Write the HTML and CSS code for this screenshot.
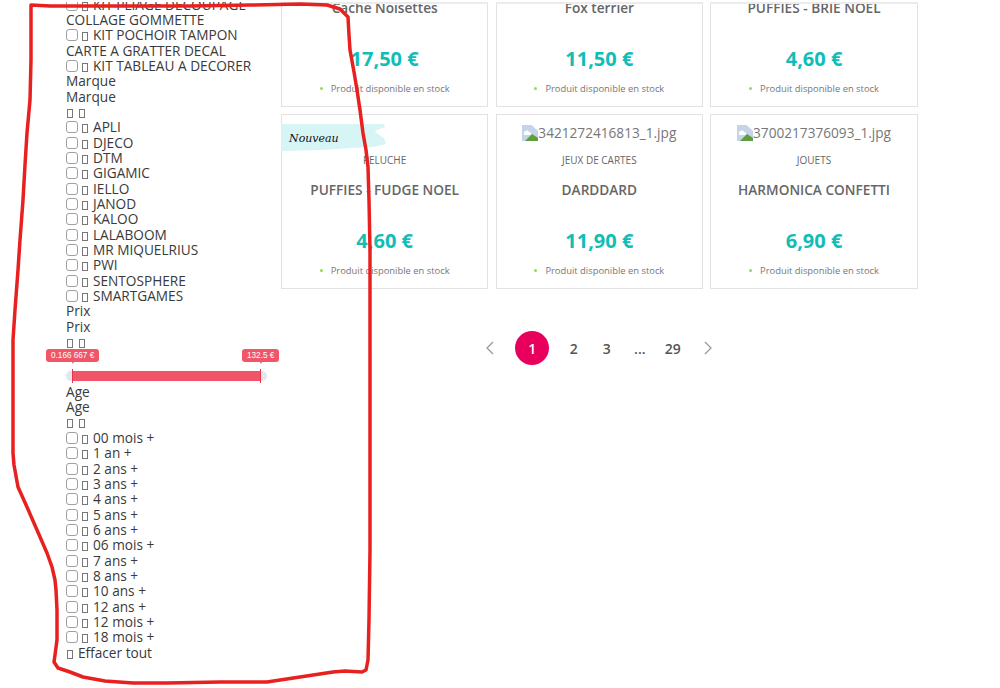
FILE: index.html
```html
<!DOCTYPE html>
<html lang="en">
<head>
    <meta charset="UTF-8">
    <title>Catalogue</title>
    <link rel="stylesheet" href="styles.css">
</head>
<body>
    <div class="shot">
        <aside class="filters">
            <div><span class="check"></span><i class="tofu"></i>KIT PLIAGE DECOUPAGE</div>
            <div>COLLAGE GOMMETTE</div>
            <div><span class="check"></span><i class="tofu"></i>KIT POCHOIR TAMPON</div>
            <div>CARTE A GRATTER DECAL</div>
            <div><span class="check"></span><i class="tofu"></i>KIT TABLEAU A DECORER</div>
            <div>Marque</div>
            <div>Marque</div>
            <div><i class="tofu tofu-head"></i><i class="tofu tofu-head"></i></div>
            <div><span class="check"></span><i class="tofu"></i>APLI</div>
            <div><span class="check"></span><i class="tofu"></i>DJECO</div>
            <div><span class="check"></span><i class="tofu"></i>DTM</div>
            <div><span class="check"></span><i class="tofu"></i>GIGAMIC</div>
            <div><span class="check"></span><i class="tofu"></i>IELLO</div>
            <div><span class="check"></span><i class="tofu"></i>JANOD</div>
            <div><span class="check"></span><i class="tofu"></i>KALOO</div>
            <div><span class="check"></span><i class="tofu"></i>LALABOOM</div>
            <div><span class="check"></span><i class="tofu"></i>MR MIQUELRIUS</div>
            <div><span class="check"></span><i class="tofu"></i>PWI</div>
            <div><span class="check"></span><i class="tofu"></i>SENTOSPHERE</div>
            <div><span class="check"></span><i class="tofu"></i>SMARTGAMES</div>
            <div>Prix</div>
            <div>Prix</div>
            <div><i class="tofu tofu-head"></i><i class="tofu tofu-head"></i></div>
            <div class="slider">
                <span class="handle handle-min"><b>0.166 667 €</b></span>
                <span class="handle handle-max"><b>132.5 €</b></span>
                <div class="track"><div class="range"></div></div>
            </div>
            <div>Age</div>
            <div>Age</div>
            <div><i class="tofu tofu-head"></i><i class="tofu tofu-head"></i></div>
            <div><span class="check"></span><i class="tofu"></i>00 mois +</div>
            <div><span class="check"></span><i class="tofu"></i>1 an +</div>
            <div><span class="check"></span><i class="tofu"></i>2 ans +</div>
            <div><span class="check"></span><i class="tofu"></i>3 ans +</div>
            <div><span class="check"></span><i class="tofu"></i>4 ans +</div>
            <div><span class="check"></span><i class="tofu"></i>5 ans +</div>
            <div><span class="check"></span><i class="tofu"></i>6 ans +</div>
            <div><span class="check"></span><i class="tofu"></i>06 mois +</div>
            <div><span class="check"></span><i class="tofu"></i>7 ans +</div>
            <div><span class="check"></span><i class="tofu"></i>8 ans +</div>
            <div><span class="check"></span><i class="tofu"></i>10 ans +</div>
            <div><span class="check"></span><i class="tofu"></i>12 ans +</div>
            <div><span class="check"></span><i class="tofu"></i>12 mois +</div>
            <div><span class="check"></span><i class="tofu"></i>18 mois +</div>
            <div><i class="tofu tofu-clear"></i>Effacer tout</div>
        </aside>

        <main class="catalog">
            <div class="products">
                <article class="card card-cut">
                    <h3>Cache Noisettes</h3>
                    <p class="price">17,50 €</p>
                    <p class="stock">Produit disponible en stock</p>
                </article>
                <article class="card card-cut">
                    <h3>Fox terrier</h3>
                    <p class="price">11,50 €</p>
                    <p class="stock">Produit disponible en stock</p>
                </article>
                <article class="card card-cut">
                    <h3>PUFFIES - BRIE NOEL</h3>
                    <p class="price">4,60 €</p>
                    <p class="stock">Produit disponible en stock</p>
                </article>
                <article class="card">
                    <div class="ribbon">
                        <svg viewBox="0 0 105 27" width="105" height="27"><path d="M0 0H60L103 0 104 3 96 6 94 8 103 14 105 20 92 23 70 24 40 26 0 27Z" fill="#d8f5f6"/></svg>
                        <span>Nouveau</span>
                    </div>
                    <div class="pic"></div>
                    <p class="cat">PELUCHE</p>
                    <h3>PUFFIES - FUDGE NOEL</h3>
                    <p class="price">4,60 €</p>
                    <p class="stock">Produit disponible en stock</p>
                </article>
                <article class="card">
                    <div class="pic">
                        <svg class="broken" viewBox="0 0 16 16" width="16" height="16"><path d="M0 0H10L14 4 16 4V16H0Z" fill="#c5d4e8"/><path d="M2 8c1-3 4-3 5-1 2 0 3 2 2 3H2Z" fill="#fff"/><path d="M3 16 10 9 16 13V16Z" fill="#5e9e3e"/><path d="M10 0 16 6 16 0Z" fill="#fff"/></svg>3421272416813_1.jpg
                    </div>
                    <p class="cat">JEUX DE CARTES</p>
                    <h3>DARDDARD</h3>
                    <p class="price">11,90 €</p>
                    <p class="stock">Produit disponible en stock</p>
                </article>
                <article class="card">
                    <div class="pic">
                        <svg class="broken" viewBox="0 0 16 16" width="16" height="16"><path d="M0 0H10L14 4 16 4V16H0Z" fill="#c5d4e8"/><path d="M2 8c1-3 4-3 5-1 2 0 3 2 2 3H2Z" fill="#fff"/><path d="M3 16 10 9 16 13V16Z" fill="#5e9e3e"/><path d="M10 0 16 6 16 0Z" fill="#fff"/></svg>3700217376093_1.jpg
                    </div>
                    <p class="cat">JOUETS</p>
                    <h3>HARMONICA CONFETTI</h3>
                    <p class="price">6,90 €</p>
                    <p class="stock">Produit disponible en stock</p>
                </article>
            </div>

            <nav class="pager">
                <svg class="arrow" viewBox="0 0 10 14" width="10" height="14"><path d="M8 1 2 7l6 6" fill="none" stroke="#999" stroke-width="1.3"/></svg>
                <span class="page current">1</span>
                <span class="page">2</span>
                <span class="page">3</span>
                <span class="page">...</span>
                <span class="page">29</span>
                <svg class="arrow arrow-next" viewBox="0 0 10 14" width="10" height="14"><path d="M2 1l6 6-6 6" fill="none" stroke="#999" stroke-width="1.3"/></svg>
            </nav>
        </main>
    </div>

    <!-- hand drawn marker round the filters -->
    <svg class="marker" viewBox="0 0 1000 688" width="1000" height="688">
        <path d="M31 5L50 6 80 6 130 6 190 6 250 5 300 4 327 5 340 9 348 17 349 35 350 50 354 72 357 90 360 110 363 133 366 150 368 167 369 200 370 250 370 350 370 450 370 550 369 620 368 660 366 670 362 672 345 671 333 672 300 677 267 682 220 682 167 683 133 683 105 681 83 677 70 672 58 668 54 662 55 655 57 640 57 610 56 590 55 580 52 567 47 553 37 530 27 507 18 487 14 465 13 453 13 400 13 340 15 310 18 270 20 240 23 200 25 165 27 133 30 100 31 60 31 5" fill="none" stroke="#e8201f" stroke-width="3.5" stroke-linejoin="round" stroke-linecap="round"/>
    </svg>
</body>
</html>
```

FILE: styles.css
```css
html, body {
    margin: 0;
    height: 688px;
    overflow: hidden;
    background-color: #fff;
}
body {
    font-family: "Open Sans", sans-serif;
    color: #333;
}
.shot {
    display: flex;
    height: 686px;
    margin-top: 2px;
    overflow: hidden;
}

/* left column, no css on the real page so it is all plain lines */
.filters {
    width: 281px;
    flex: none;
    box-sizing: border-box;
    padding-left: 66px;
    margin-top: -5.5px;
    font-size: 13.65px;
    line-height: 15.35px;
    color: #3a3a3a;
}
.filters > div {
    height: 15.35px;
    white-space: nowrap;
}
.check {
    display: inline-block;
    box-sizing: border-box;
    width: 12px;
    height: 12px;
    margin-right: 4px;
    border: 1px solid #a0a0a0;
    border-radius: 3px;
    vertical-align: -1px;
}
.tofu {
    display: inline-block;
    box-sizing: border-box;
    width: 6px;
    height: 9px;
    margin-right: 5px;
    border: 1px solid #777;
    vertical-align: -1px;
}
.tofu-head {
    margin-left: 1px;
    margin-right: 5px;
}
.tofu-clear {
    margin-left: 1px;
    margin-right: 5px;
}

/* price slider */
.filters > .slider {
    position: relative;
    height: 34.4px;
}
.track {
    position: absolute;
    left: 0;
    top: 22px;
    width: 201px;
    height: 10px;
    border-radius: 5px;
    background-color: #e3e6ec;
}
.range {
    position: absolute;
    left: 6px;
    right: 6px;
    top: 0;
    height: 100%;
    background-color: #f05668;
}
.range::before,
.range::after {
    content: "";
    position: absolute;
    top: -2px;
    bottom: -2px;
    width: 1px;
    background-color: #e0354b;
}
.range::before {
    left: 0;
}
.range::after {
    right: 0;
}
.handle b {
    position: absolute;
    top: 0;
    height: 13px;
    padding: 0 5px;
    border-radius: 3px;
    background-color: #f05668;
    color: #fff;
    font-family: "Liberation Sans", sans-serif;
    font-size: 8.2px;
    font-weight: normal;
    line-height: 13px;
}
.handle-min b {
    left: -20px;
}
.handle-max b {
    left: 176px;
}
.handle b::after {
    content: "";
    position: absolute;
    left: 50%;
    bottom: -2px;
    margin-left: -1px;
    border-top: 2px solid #f05668;
    border-left: 1px solid transparent;
    border-right: 1px solid transparent;
}

/* products */
.catalog {
    width: 636.7px;
    flex: none;
}
.products {
    display: grid;
    grid-template-columns: repeat(3, 207.3px);
    grid-template-rows: 105px 175px;
    column-gap: 7.4px;
    row-gap: 7px;
}
.card {
    position: relative;
    box-sizing: border-box;
    border: 1px solid #e2e2e2;
    text-align: center;
    color: #666;
}
.card-cut {
    border-top: 2px solid #ececec;
    overflow: hidden;
}
.card h3 {
    margin: 0;
    font-size: 13.65px;
    font-weight: 600;
    line-height: 19px;
    color: #666;
}
.card-cut h3 {
    margin-top: -6px;
}
.price {
    margin: 28.5px 0 0;
    font-size: 20px;
    font-weight: 700;
    line-height: 26px;
    color: #10bdb7;
}
.stock {
    margin: 10px 0 0;
    font-size: 9.4px;
    line-height: 13px;
    color: #777;
}
.stock::before {
    content: "";
    display: inline-block;
    width: 3px;
    height: 3px;
    margin-right: 8px;
    border-radius: 50%;
    background-color: #8fdc5a;
    vertical-align: 2px;
}
.pic {
    height: 28px;
    padding-top: 8px;
    font-size: 13.65px;
    line-height: 19px;
    color: #777;
}
.broken {
    vertical-align: -3px;
}
.cat {
    margin: 2px 0 13px;
    font-size: 10px;
    line-height: 14px;
    color: #666;
}
.ribbon {
    position: absolute;
    left: -1px;
    top: 9px;
    width: 105px;
    height: 27px;
}
.ribbon svg {
    display: block;
}
.ribbon span {
    position: absolute;
    left: 8px;
    top: 8px;
    font-family: "DejaVu Serif", serif;
    font-style: italic;
    font-size: 11px;
    line-height: 13px;
    color: #111;
}

/* pagination */
.pager {
    display: flex;
    align-items: center;
    justify-content: center;
    margin-top: 42px;
    color: #555;
    font-size: 14px;
    font-weight: 600;
}
.arrow {
    flex: none;
}
.arrow-next {
    margin-left: 14px;
}
.page {
    display: flex;
    align-items: center;
    justify-content: center;
    min-width: 33px;
    height: 34px;
}
.page.current {
    width: 34px;
    min-width: 34px;
    margin: 0 8px 0 20px;
    border-radius: 50%;
    background-color: #e8005c;
    color: #fff;
}

/* the red marker drawn on top of the capture */
.marker {
    position: absolute;
    left: 0;
    top: 0;
    pointer-events: none;
}
```
